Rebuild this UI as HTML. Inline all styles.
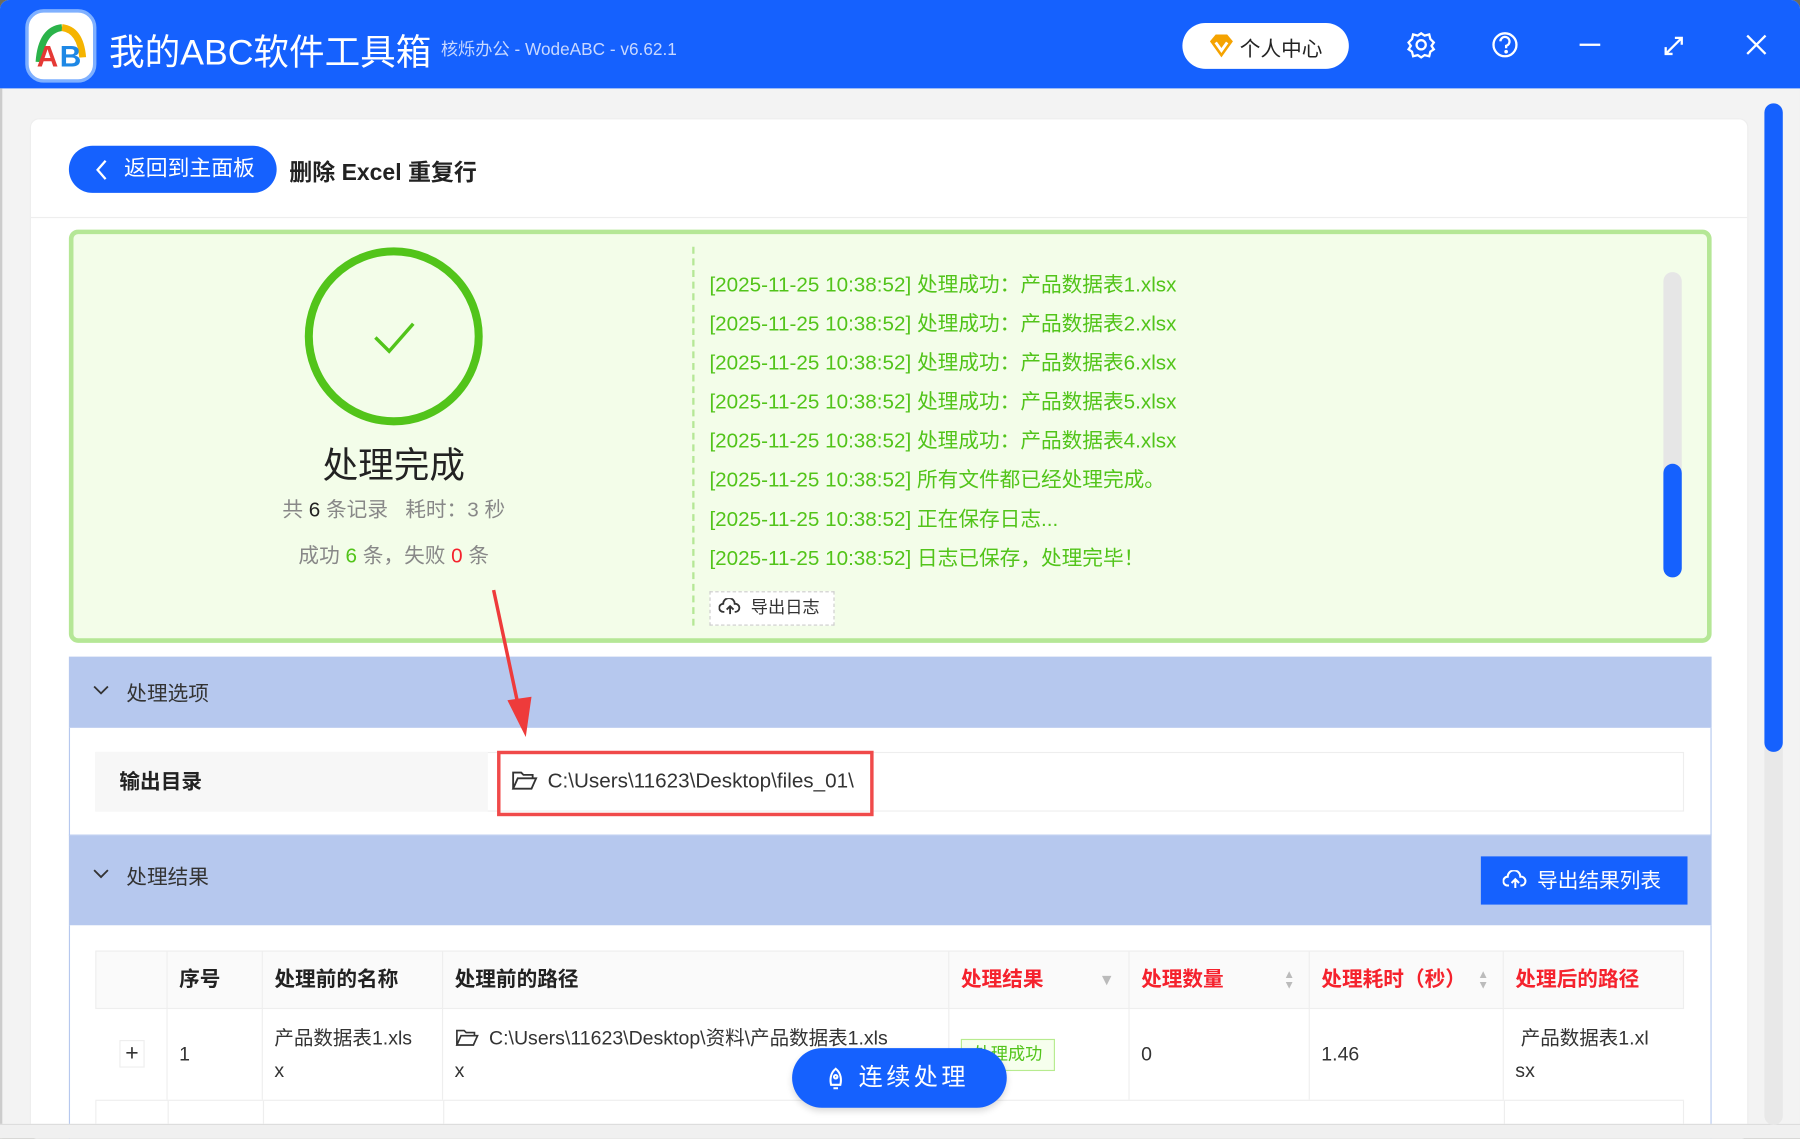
<!DOCTYPE html>
<html><head><meta charset="utf-8"><style>
*{box-sizing:border-box;margin:0;padding:0}
body{width:1800px;height:1139px;overflow:hidden;background:#6b6b5e;font-family:"Liberation Sans","Noto Sans CJK SC",sans-serif}
#w{position:absolute;left:0;top:0;width:1568px;height:992px;transform:scale(1.147959);transform-origin:0 0;background:#f3f3f3;border-radius:8px 8px 0 0;overflow:hidden}
.a{position:absolute}
.tb{left:0;top:0;width:1568px;height:77px;background:#1561fe}
.log{position:absolute;left:618px;color:#52c41a;font-size:18px;white-space:nowrap}
.th{position:absolute;top:828px;height:51px;line-height:51px;font-size:18px;font-weight:bold;color:#222;padding-left:10px;border-right:1px solid #eee}
.td{position:absolute;top:879px;height:79px;font-size:17px;color:#333;padding:12px 10px;line-height:28px;border-right:1px solid #eee}
</style></head><body><div id="w">
<div class="a tb"></div>
<div class="a" style="left:22px;top:8px;width:62px;height:64px;background:#fff;border-radius:16px;border:3px solid #7fb0ff"></div>
<svg class="a" style="left:26px;top:14px" width="56" height="52" viewBox="0 0 56 52"><path d="M8 40 Q10 12 28 10" stroke="#2bb34a" stroke-width="6" fill="none"/><path d="M28 10 Q44 12 46 36" stroke="#f5b400" stroke-width="6" fill="none"/><text x="6" y="44" font-size="26" font-weight="bold" fill="#e53935" font-family="Liberation Sans">A</text><text x="26" y="44" font-size="26" font-weight="bold" fill="#1e88e5" font-family="Liberation Sans">B</text></svg>
<div class="a" style="left:95px;top:20px;color:#fff;font-size:31px">我的ABC软件工具箱</div>
<div class="a" style="left:384px;top:32px;color:#c8d8ff;font-size:15px">核烁办公 - WodeABC - v6.62.1</div>
<div class="a" style="left:1030px;top:20px;width:145px;height:40px;background:#fff;border-radius:20px"></div>
<svg class="a" style="left:1052px;top:29px" width="24" height="22" viewBox="0 0 24 22"><path d="M2 7 L7 1 H17 L22 7 L12 21 Z" fill="#f5a300"/><path d="M7 8 L12 15 L17 8" stroke="#fff" stroke-width="2.5" fill="none"/></svg>
<div class="a" style="left:1080px;top:29px;font-size:18px;color:#222">个人中心</div>
<svg class="a" style="left:1225px;top:26px" width="150" height="28" viewBox="0 0 150 28" fill="none" stroke="#fff" stroke-width="2"><circle cx="13" cy="13" r="4"/><path d="M13 3 l3 2 4-1 1 4 3 3-2 3 2 3-3 2-1 4-4-1-3 2-3-2-4 1-1-4-3-2 2-3-2-3 3-3 1-4 4 1z"/><circle cx="86" cy="13" r="10"/><path d="M82 10 a4 4 0 1 1 5 4 v2"/><circle cx="87" cy="19" r=".6" fill="#fff"/></svg>
<div class="a" style="left:1376px;top:38px;width:18px;height:2px;background:#fff"></div>
<svg class="a" style="left:1448px;top:30px" width="20" height="20" viewBox="0 0 20 20" stroke="#fff" stroke-width="2" fill="none"><path d="M3 17 L17 3 M11 3 H17 V9 M3 11 V17 H9"/></svg>
<svg class="a" style="left:1521px;top:30px" width="18" height="18" viewBox="0 0 18 18" stroke="#fff" stroke-width="2"><path d="M1 1 L17 17 M17 1 L1 17"/></svg>
<div class="a" style="left:0;top:77px;width:2px;height:915px;background:#ccc"></div>
<div class="a" style="left:26px;top:103px;width:1497px;height:890px;background:#fff;border:1px solid #eee;border-radius:8px"></div>
<div class="a" style="left:60px;top:127px;width:181px;height:41px;background:#1561fe;border-radius:21px;color:#fff;font-size:19px;line-height:41px;padding-left:48px">返回到主面板</div>
<svg class="a" style="left:82px;top:138px" width="12" height="20" viewBox="0 0 12 20"><path d="M10 2 L3 10 L10 18" stroke="#fff" stroke-width="2" fill="none"/></svg>
<div class="a" style="left:252px;top:134px;font-size:20px;font-weight:bold;color:#222">删除 Excel 重复行</div>
<div class="a" style="left:27px;top:189px;width:1495px;height:1px;background:#eee"></div>
<div class="a" style="left:60px;top:200px;width:1431px;height:360px;background:#f3fde9;border:4px solid #b5e796;border-radius:8px"></div>
<svg class="a" style="left:264px;top:214px" width="158" height="158"><circle cx="79" cy="79" r="74" stroke="#52c41a" stroke-width="7" fill="none"/><path d="M63 80 L75 92 L96 68" stroke="#52c41a" stroke-width="3" fill="none"/></svg>
<div class="a" style="left:243px;top:380px;width:200px;text-align:center;font-size:31px;color:#222">处理完成</div>
<div class="a" style="left:193px;top:430px;width:300px;text-align:center;font-size:18px;color:#888">共 <span style="color:#222">6</span> 条记录 &nbsp; 耗时：3 秒</div>
<div class="a" style="left:193px;top:470px;width:300px;text-align:center;font-size:18px;color:#888">成功 <span style="color:#52c41a">6</span> 条，失败 <span style="color:#f5222d">0</span> 条</div>
<div class="a" style="left:603px;top:215px;width:0;height:330px;border-left:2px dashed #b5e796"></div>
<div class="log" style="top:234px">[2025-11-25 10:38:52] 处理成功：产品数据表1.xlsx</div>
<div class="log" style="top:268px">[2025-11-25 10:38:52] 处理成功：产品数据表2.xlsx</div>
<div class="log" style="top:302px">[2025-11-25 10:38:52] 处理成功：产品数据表6.xlsx</div>
<div class="log" style="top:336px">[2025-11-25 10:38:52] 处理成功：产品数据表5.xlsx</div>
<div class="log" style="top:370px">[2025-11-25 10:38:52] 处理成功：产品数据表4.xlsx</div>
<div class="log" style="top:404px">[2025-11-25 10:38:52] 所有文件都已经处理完成。</div>
<div class="log" style="top:438px">[2025-11-25 10:38:52] 正在保存日志...</div>
<div class="log" style="top:472px">[2025-11-25 10:38:52] 日志已保存，处理完毕！</div>
<div class="a" style="left:618px;top:515px;width:109px;height:30px;border:1px dashed #ccc;background:#fff;font-size:15px;color:#333;line-height:28px;padding-left:35px">导出日志</div>
<svg class="a" style="left:626px;top:521px" width="20" height="16" viewBox="0 0 20 16" fill="none" stroke="#333" stroke-width="1.6"><path d="M5 12 H4 a3.5 3.5 0 0 1 0-7 a5 5 0 0 1 10 0 a3.5 3.5 0 0 1 1 7 H14 M10 14 V7 M7 10 L10 7 13 10"/></svg>
<div class="a" style="left:1449px;top:237px;width:16px;height:266px;background:#e6e6e6;border-radius:8px"></div>
<div class="a" style="left:1449px;top:404px;width:16px;height:99px;background:#1561fe;border-radius:8px"></div>
<div class="a" style="left:60px;top:572px;width:1431px;height:62px;background:#b6c8ee"></div>
<svg class="a" style="left:80px;top:595px" width="16" height="12"><path d="M2 3 L8 9 L14 3" stroke="#333" stroke-width="1.6" fill="none"/></svg>
<div class="a" style="left:110px;top:590px;font-size:18px;color:#333">处理选项</div>
<div class="a" style="left:60px;top:634px;width:1431px;height:94px;border:1px solid #b6c8ee;border-top:0"></div>
<div class="a" style="left:83px;top:655px;width:1384px;height:52px;border:1px solid #eee"></div>
<div class="a" style="left:83px;top:655px;width:342px;height:52px;background:#f7f7f7;font-size:18px;font-weight:bold;color:#222;line-height:52px;padding-left:21px">输出目录</div>
<div class="a" style="left:433px;top:654px;width:328px;height:57px;border:3px solid #f04a4a"></div>
<svg class="a" style="left:445px;top:670px" width="24" height="20" viewBox="0 0 24 20" fill="none" stroke="#333" stroke-width="1.6"><path d="M2 17 V3 H9 L11 5 H19 V8 M2 17 L6 8 H22 L18 17 Z"/></svg>
<div class="a" style="left:477px;top:670px;font-size:18px;color:#333">C:\Users\11623\Desktop\files_01\</div>
<div class="a" style="left:60px;top:728px;width:1431px;height:78px;background:#b6c8ee"></div>
<svg class="a" style="left:80px;top:755px" width="16" height="12"><path d="M2 3 L8 9 L14 3" stroke="#333" stroke-width="1.6" fill="none"/></svg>
<div class="a" style="left:110px;top:750px;font-size:18px;color:#333">处理结果</div>
<div class="a" style="left:1290px;top:746px;width:180px;height:42px;background:#1561fe;color:#fff;font-size:18px;line-height:42px;padding-left:49px">导出结果列表</div>
<svg class="a" style="left:1309px;top:758px" width="22" height="18" viewBox="0 0 20 16" fill="none" stroke="#fff" stroke-width="1.6"><path d="M5 12 H4 a3.5 3.5 0 0 1 0-7 a5 5 0 0 1 10 0 a3.5 3.5 0 0 1 1 7 H14 M10 14 V7 M7 10 L10 7 13 10"/></svg>
<div class="a" style="left:60px;top:806px;width:1431px;height:190px;border-left:1px solid #b6c8ee;border-right:1px solid #b6c8ee"></div>
<div class="a" style="left:83px;top:828px;width:1384px;height:51px;background:#fafafa;border:1px solid #eee"></div>
<div class="th" style="left:83px;width:63px"></div>
<div class="th" style="left:146px;width:83px">序号</div>
<div class="th" style="left:229px;width:157px">处理前的名称</div>
<div class="th" style="left:386px;width:441px">处理前的路径</div>
<div class="th" style="left:827px;width:157px;color:#f5222d">处理结果<span style="position:absolute;right:12px;color:#bbb;font-size:14px">▼</span></div>
<div class="th" style="left:984px;width:157px;color:#f5222d">处理数量<span style="position:absolute;right:12px;color:#bbb;font-size:10px;line-height:9px;top:17px">▲<br>▼</span></div>
<div class="th" style="left:1141px;width:169px;color:#f5222d">处理耗时（秒）<span style="position:absolute;right:12px;color:#bbb;font-size:10px;line-height:9px;top:17px">▲<br>▼</span></div>
<div class="th" style="left:1310px;width:157px;color:#f5222d;border-right:0">处理后的路径</div>
<div class="a" style="left:83px;top:958px;width:1384px;height:1px;background:#eee"></div>
<div class="td" style="left:83px;width:63px;padding-top:26px;padding-left:21px"><span style="display:inline-block;width:22px;height:24px;border:1px solid #eee;text-align:center;line-height:22px;font-size:20px">+</span></div>
<div class="td" style="left:146px;width:83px;padding-top:26px">1</div>
<div class="td" style="left:229px;width:157px">产品数据表1.xls<br>x</div>
<div class="td" style="left:386px;width:441px;padding-left:40px"><span style="margin-left:0">C:\Users\11623\Desktop\资料\产品数据表1.xls</span><br><span style="margin-left:-30px">x</span></div>
<svg class="a" style="left:396px;top:895px" width="22" height="18" viewBox="0 0 24 20" fill="none" stroke="#333" stroke-width="1.6"><path d="M2 17 V3 H9 L11 5 H19 V8 M2 17 L6 8 H22 L18 17 Z"/></svg>
<div class="td" style="left:827px;width:157px;padding-top:25px"><span style="display:inline-block;border:1px solid #b7eb8f;background:#f6ffed;color:#52c41a;font-size:15px;line-height:26px;padding:0 10px">处理成功</span></div>
<div class="td" style="left:984px;width:157px;padding-top:26px">0</div>
<div class="td" style="left:1141px;width:169px;padding-top:26px">1.46</div>
<div class="td" style="left:1310px;width:157px;border-right:0">&nbsp;产品数据表1.xl<br>sx</div>
<div class="a" style="left:83px;top:959px;width:1384px;height:20px;border-left:1px solid #eee;border-right:1px solid #eee"></div>
<div class="a" style="left:146px;top:959px;width:1px;height:20px;background:#eee"></div>
<div class="a" style="left:229px;top:959px;width:1px;height:20px;background:#eee"></div>
<div class="a" style="left:386px;top:959px;width:1px;height:20px;background:#eee"></div>
<div class="a" style="left:1310px;top:959px;width:1px;height:20px;background:#eee"></div>
<div class="a" style="left:690px;top:913px;width:187px;height:52px;background:#1561fe;border-radius:26px;color:#fff;font-size:21px;line-height:52px;padding-left:58px;letter-spacing:3px;box-shadow:0 3px 6px rgba(0,0,0,.15)">连续处理</div>
<svg class="a" style="left:718px;top:929px" width="20" height="22" viewBox="0 0 20 22" fill="none" stroke="#fff" stroke-width="1.8"><path d="M10 2 C5 6 5 12 6 16 H14 C15 12 15 6 10 2 Z M8 19 H12"/><circle cx="10" cy="9" r="1.5"/></svg>
<div class="a" style="left:0;top:979px;width:1568px;height:13px;background:#f0f0f0;border-top:1px solid #ddd"></div>
<div class="a" style="left:1537px;top:90px;width:16px;height:890px;background:#e8e8e8;border-radius:8px"></div>
<div class="a" style="left:1537px;top:90px;width:16px;height:565px;background:#1561fe;border-radius:8px"></div>
<svg class="a" style="left:420px;top:510px" width="50" height="135"><path d="M10 4 L33 112" stroke="#ee3b3b" stroke-width="3"/><path d="M22 100 L38 132 L43 97 Z" fill="#ee3b3b"/></svg>
</div></body></html>
